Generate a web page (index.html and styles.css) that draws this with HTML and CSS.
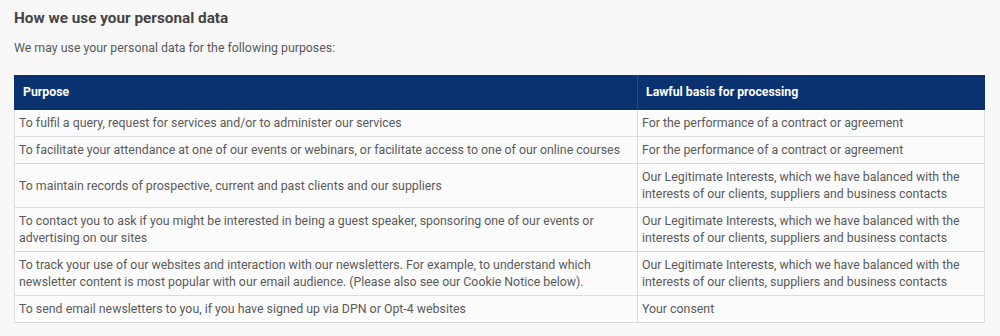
FILE: index.html
```html
<!DOCTYPE html>
<html lang="en">
<head>
<meta charset="utf-8">
<title>How we use your personal data</title>
<link rel="stylesheet" href="styles.css">
</head>
<body>
<main class="page">
  <h2 class="title">How we use your personal data</h2>
  <p class="intro">We may use your personal data for the following purposes:</p>
  <table class="data-table">
    <colgroup><col class="col-purpose"><col class="col-basis"></colgroup>
    <thead>
      <tr><th>Purpose</th><th>Lawful basis for processing</th></tr>
    </thead>
    <tbody>
      <tr><td>To fulfil a query, request for services and/or to administer our services</td><td>For the performance of a contract or agreement</td></tr>
      <tr><td>To facilitate your attendance at one of our events or webinars, or facilitate access to one of our online courses</td><td>For the performance of a contract or agreement</td></tr>
      <tr><td>To maintain records of prospective, current and past clients and our suppliers</td><td>Our Legitimate Interests, which we have balanced with the interests of our clients, suppliers and business contacts</td></tr>
      <tr><td>To contact you to ask if you might be interested in being a guest speaker, sponsoring one of our events or advertising on our sites</td><td>Our Legitimate Interests, which we have balanced with the interests of our clients, suppliers and business contacts</td></tr>
      <tr><td>To track your use of our websites and interaction with our newsletters. For example, to understand which newsletter content is most popular with our email audience. (Please also see our Cookie Notice below).</td><td>Our Legitimate Interests, which we have balanced with the interests of our clients, suppliers and business contacts</td></tr>
      <tr><td>To send email newsletters to you, if you have signed up via DPN or Opt-4 websites</td><td>Your consent</td></tr>
    </tbody>
  </table>
</main>
</body>
</html>
```
FILE: styles.css
```css
html, body {
  margin: 0;
  padding: 0;
  background: #f8f8f8;
}
body {
  font-family: Roboto, "Liberation Sans", Arial, sans-serif;
  color: #5a5a5a;
}
.page {
  padding: 8px 14px 0 14px;
  width: 969px;
}
.title {
  margin: 0;
  font-size: 15.3px;
  line-height: 20px;
  font-weight: 700;
  color: #444;
}
.intro {
  margin: 11px 0 0 0;
  font-size: 12.35px;
  line-height: 18px;
  color: #5a5a5a;
}
.data-table {
  margin-top: 18px;
  width: 970px;
  border-collapse: collapse;
  table-layout: fixed;
  font-size: 12.35px;
  line-height: 17px;
}
.col-purpose { width: 623px; }
.col-basis { width: 347px; }
.data-table th {
  background: #0b3270;
  color: #fff;
  font-weight: 700;
  font-size: 12.3px;
  text-align: left;
  padding: 8px 8px;
  border: 1px solid #0b3270;
  border-right-color: #2a4a80;
}
.data-table th:last-child { border-right-color: #0b3270; }
.data-table td {
  background: #fcfcfc;
  border: 1px solid #dcdcdc;
  padding: 5px 4px 4px 4px;
  vertical-align: middle;
  color: #5a5a5a;
}
```
